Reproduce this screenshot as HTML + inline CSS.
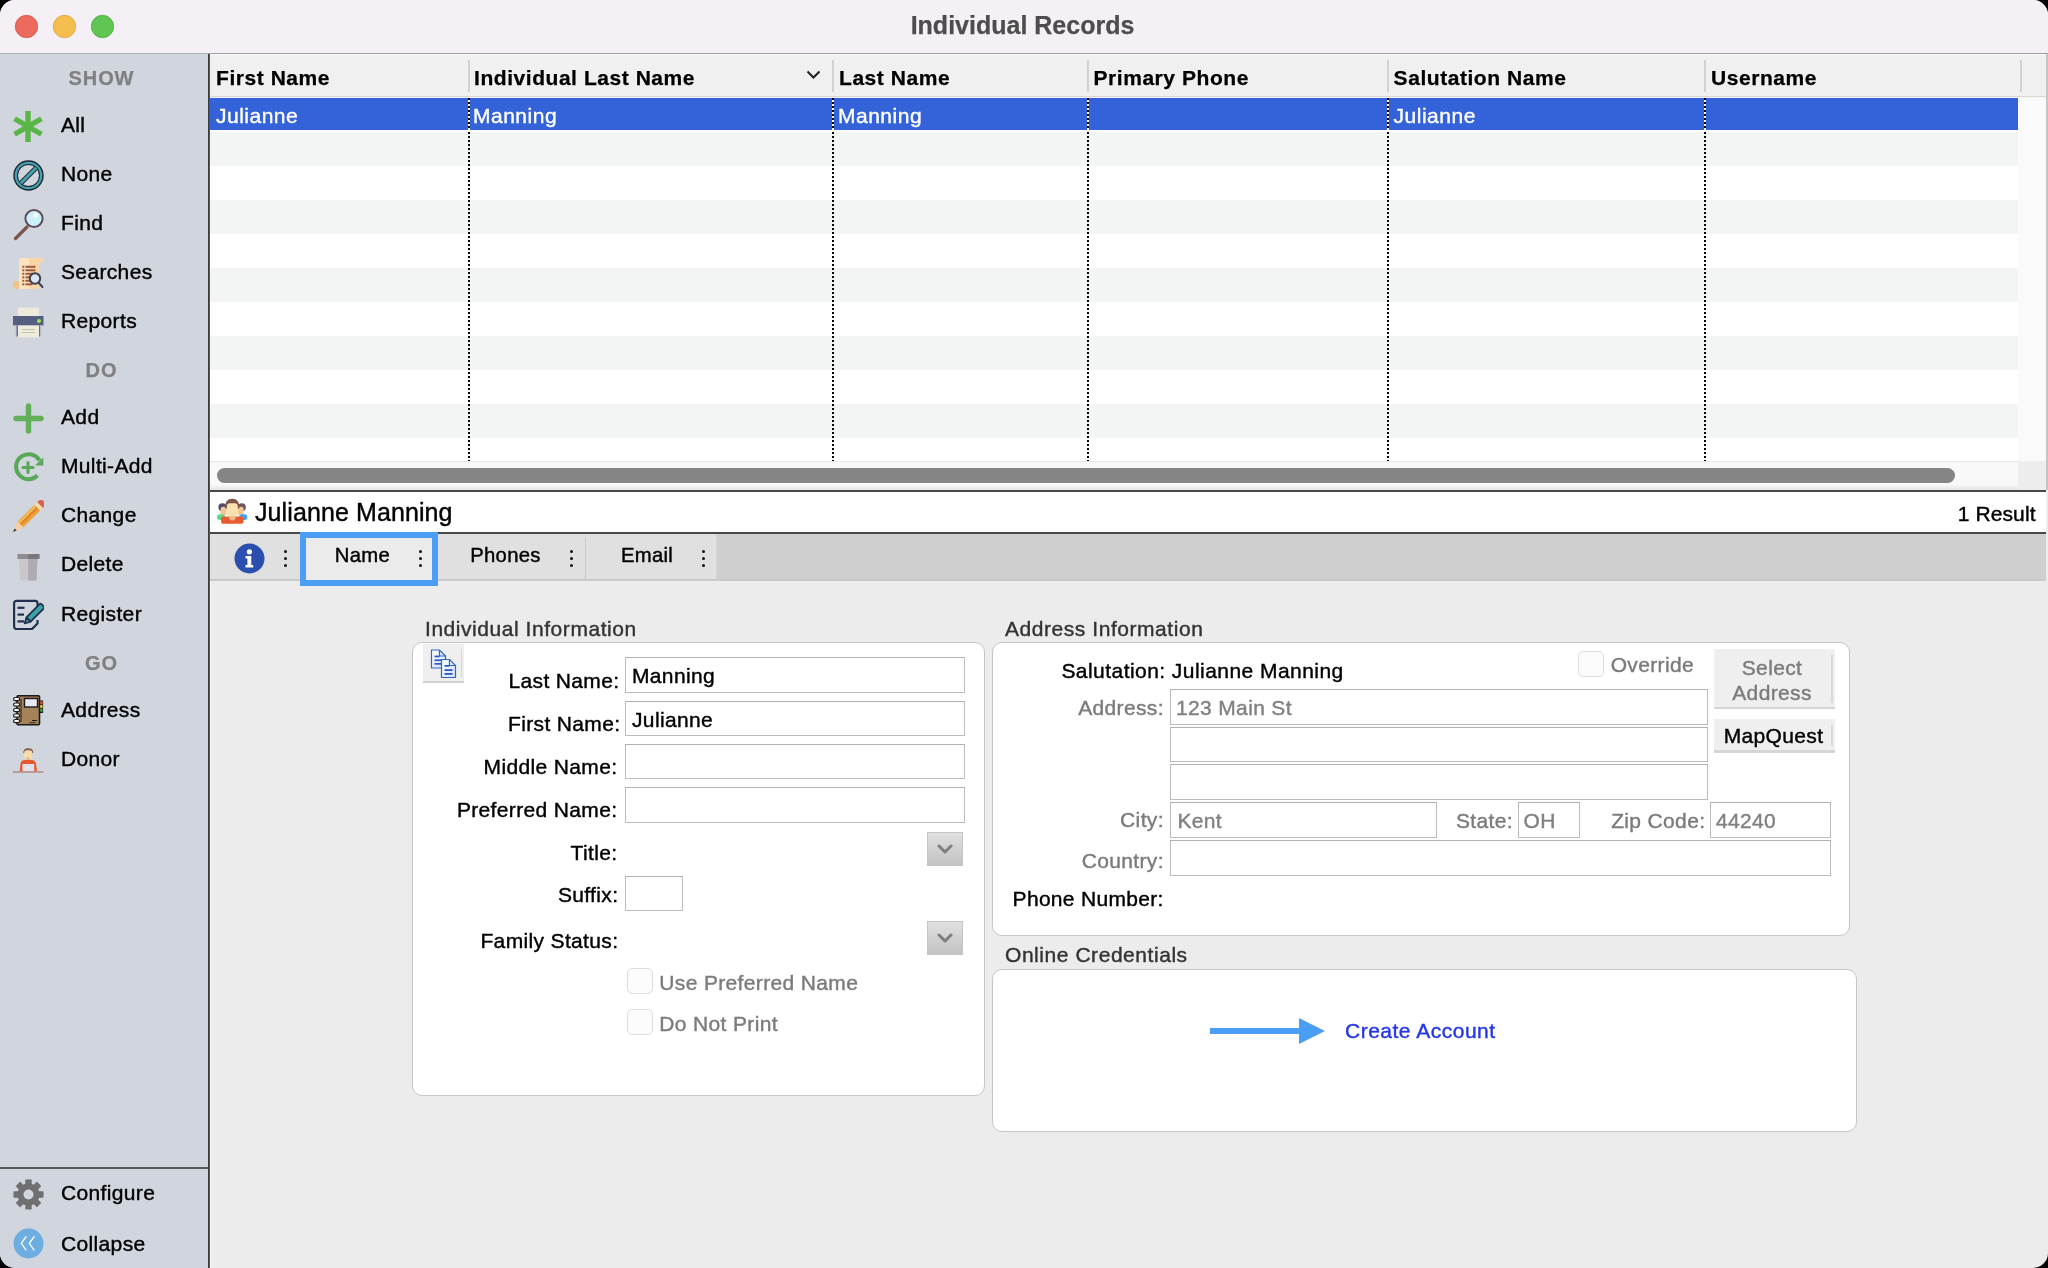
<!DOCTYPE html><html><head><meta charset="utf-8"><title>Individual Records</title><style>
html,body{margin:0;padding:0;background:#000;width:2048px;height:1268px;overflow:hidden;}
#win{will-change:transform;position:absolute;left:0;top:0;width:2048px;height:1268px;border-radius:15px;overflow:hidden;background:#ececec;font-family:"Liberation Sans", sans-serif;}
</style></head><body><div id="win">
<div style="position:absolute;left:0px;top:0px;width:2048px;height:53px;background:#f5f0f5;"></div>
<div style="position:absolute;left:0px;top:53px;width:2048px;height:1px;background:#a0a0a0;"></div>
<div style="position:absolute;left:0px;top:53px;width:208px;height:1px;background:#a9b0bb;"></div>
<svg style="position:absolute;left:14.0px;top:14px" width="25" height="25" viewBox="0 0 25 25"><circle cx="12.5" cy="12.5" r="11.2" fill="#ed6a5e" stroke="#d5544a" stroke-width="0.8"/></svg>
<svg style="position:absolute;left:52.0px;top:14px" width="25" height="25" viewBox="0 0 25 25"><circle cx="12.5" cy="12.5" r="11.2" fill="#f4bf4f" stroke="#d9a43a" stroke-width="0.8"/></svg>
<svg style="position:absolute;left:89.5px;top:14px" width="25" height="25" viewBox="0 0 25 25"><circle cx="12.5" cy="12.5" r="11.2" fill="#61c554" stroke="#4ea93f" stroke-width="0.8"/></svg>
<div style="position:absolute;left:622.5px;width:800px;text-align:center;top:12.84px;font-size:25px;line-height:25px;font-weight:700;color:#4d4d4d;letter-spacing:0px;white-space:nowrap;-webkit-text-stroke:0.25px currentColor;">Individual Records</div>
<div style="position:absolute;left:0px;top:54px;width:208px;height:1214px;background:#d1d5de;"></div>
<div style="position:absolute;left:208px;top:54px;width:1px;height:1214px;background:#3c3c3c;"></div>
<div style="position:absolute;left:209px;top:54px;width:1px;height:1214px;background:#555555;"></div>
<div style="position:absolute;left:-298.5px;width:800px;text-align:center;top:67.77px;font-size:20px;line-height:20px;font-weight:700;color:#808080;letter-spacing:0.9px;white-space:nowrap;-webkit-text-stroke:0.25px currentColor;">SHOW</div>
<div style="position:absolute;left:-298.5px;width:800px;text-align:center;top:360.07px;font-size:20px;line-height:20px;font-weight:700;color:#808080;letter-spacing:0.9px;white-space:nowrap;-webkit-text-stroke:0.25px currentColor;">DO</div>
<div style="position:absolute;left:-298.5px;width:800px;text-align:center;top:652.97px;font-size:20px;line-height:20px;font-weight:700;color:#808080;letter-spacing:0.9px;white-space:nowrap;-webkit-text-stroke:0.25px currentColor;">GO</div>
<div style="position:absolute;left:61px;top:113.92px;font-size:21px;line-height:21px;font-weight:400;color:#000;letter-spacing:0.35px;white-space:nowrap;-webkit-text-stroke:0.4px currentColor;">All</div>
<div style="position:absolute;left:61px;top:163.02px;font-size:21px;line-height:21px;font-weight:400;color:#000;letter-spacing:0.35px;white-space:nowrap;-webkit-text-stroke:0.4px currentColor;">None</div>
<div style="position:absolute;left:61px;top:212.02px;font-size:21px;line-height:21px;font-weight:400;color:#000;letter-spacing:0.35px;white-space:nowrap;-webkit-text-stroke:0.4px currentColor;">Find</div>
<div style="position:absolute;left:61px;top:261.02px;font-size:21px;line-height:21px;font-weight:400;color:#000;letter-spacing:0.35px;white-space:nowrap;-webkit-text-stroke:0.4px currentColor;">Searches</div>
<div style="position:absolute;left:61px;top:310.02px;font-size:21px;line-height:21px;font-weight:400;color:#000;letter-spacing:0.35px;white-space:nowrap;-webkit-text-stroke:0.4px currentColor;">Reports</div>
<div style="position:absolute;left:61px;top:406.22px;font-size:21px;line-height:21px;font-weight:400;color:#000;letter-spacing:0.35px;white-space:nowrap;-webkit-text-stroke:0.4px currentColor;">Add</div>
<div style="position:absolute;left:61px;top:455.22px;font-size:21px;line-height:21px;font-weight:400;color:#000;letter-spacing:0.35px;white-space:nowrap;-webkit-text-stroke:0.4px currentColor;">Multi-Add</div>
<div style="position:absolute;left:61px;top:504.32px;font-size:21px;line-height:21px;font-weight:400;color:#000;letter-spacing:0.35px;white-space:nowrap;-webkit-text-stroke:0.4px currentColor;">Change</div>
<div style="position:absolute;left:61px;top:553.42px;font-size:21px;line-height:21px;font-weight:400;color:#000;letter-spacing:0.35px;white-space:nowrap;-webkit-text-stroke:0.4px currentColor;">Delete</div>
<div style="position:absolute;left:61px;top:602.62px;font-size:21px;line-height:21px;font-weight:400;color:#000;letter-spacing:0.35px;white-space:nowrap;-webkit-text-stroke:0.4px currentColor;">Register</div>
<div style="position:absolute;left:61px;top:698.62px;font-size:21px;line-height:21px;font-weight:400;color:#000;letter-spacing:0.35px;white-space:nowrap;-webkit-text-stroke:0.4px currentColor;">Address</div>
<div style="position:absolute;left:61px;top:747.52px;font-size:21px;line-height:21px;font-weight:400;color:#000;letter-spacing:0.35px;white-space:nowrap;-webkit-text-stroke:0.4px currentColor;">Donor</div>
<div style="position:absolute;left:61px;top:1181.82px;font-size:21px;line-height:21px;font-weight:400;color:#000;letter-spacing:0.35px;white-space:nowrap;-webkit-text-stroke:0.4px currentColor;">Configure</div>
<div style="position:absolute;left:61px;top:1232.62px;font-size:21px;line-height:21px;font-weight:400;color:#000;letter-spacing:0.35px;white-space:nowrap;-webkit-text-stroke:0.4px currentColor;">Collapse</div>
<div style="position:absolute;left:0px;top:1166.5px;width:208px;height:2.0px;background:#585858;"></div>
<svg style="position:absolute;left:13px;top:111px" width="30" height="31" viewBox="0 0 30 31"><g fill="#5ab646"><rect x="12.3" y="0" width="5.4" height="31"/><rect x="12.3" y="0" width="5.4" height="31" transform="rotate(60 15 15.5)"/><rect x="12.3" y="0" width="5.4" height="31" transform="rotate(-60 15 15.5)"/></g></svg>
<svg style="position:absolute;left:13px;top:160px" width="31" height="31" viewBox="0 0 31 31"><circle cx="15.5" cy="15.5" r="15.2" fill="#1c2a2e"/><circle cx="15.5" cy="15.5" r="13.8" fill="#45a0b0"/><circle cx="15.5" cy="15.5" r="11.5" fill="#1c2a2e"/><circle cx="15.5" cy="15.5" r="10.5" fill="#d1d5de"/><g transform="rotate(45 15.5 15.5)"><rect x="13" y="4.2" width="5" height="22.6" fill="#1c2a2e"/><rect x="14" y="4.5" width="3" height="22" fill="#45a0b0"/></g></svg>
<svg style="position:absolute;left:13px;top:208px" width="31" height="33" viewBox="0 0 31 33"><line x1="2.5" y1="30.5" x2="14" y2="19" stroke="#7d5448" stroke-width="3.2" stroke-linecap="round"/><circle cx="21" cy="10.5" r="8.6" fill="#c9f0fb" stroke="#5e4b5c" stroke-width="2"/><circle cx="22.5" cy="7.5" r="2.4" fill="#ffffff"/></svg>
<svg style="position:absolute;left:13px;top:258px" width="31" height="31" viewBox="0 0 31 31"><path d="M6 3 Q6 0 9 0 H28 Q30.5 0 30.5 3 V4.5 H26 V28 Q26 31 23 31 H3 Q0 31 0 28 V23 H6 Z" fill="#fbe3bd"/><path d="M16 0 H28 Q30.5 0 30.5 3 V4.5 H26 V31 H16 Z" fill="#f6d09e" opacity="0.7"/><path d="M0 23 H6 V31 H3 Q0 31 0 28 Z" fill="#eec38c"/><g fill="#9c5a3c"><rect x="9.3" y="7.8" width="2" height="2"/><rect x="12.5" y="7.8" width="10" height="2"/><rect x="9.3" y="11.3" width="2" height="2"/><rect x="12.5" y="11.3" width="10" height="2"/><rect x="9.3" y="14.8" width="2" height="2"/><rect x="12.5" y="14.8" width="8" height="2"/><rect x="9.3" y="18.3" width="2" height="2"/><rect x="12.5" y="18.3" width="5" height="2"/><rect x="9.3" y="21.8" width="2" height="2"/><rect x="12.5" y="21.8" width="5" height="2"/><rect x="9.3" y="25.3" width="2" height="2"/><rect x="12.5" y="25.3" width="7" height="2"/></g><line x1="25" y1="24" x2="29.5" y2="29" stroke="#3b4250" stroke-width="2" stroke-linecap="round"/><circle cx="22" cy="20.5" r="5.2" fill="#dfe4f3" stroke="#3b4250" stroke-width="2"/></svg>
<svg style="position:absolute;left:13px;top:307px" width="31" height="31" viewBox="0 0 31 31"><rect x="5" y="0.5" width="21" height="9" fill="#eeebdc"/><rect x="0" y="9" width="30.5" height="9.5" fill="#545f80"/><circle cx="26" cy="14" r="2" fill="#9be25a"/><rect x="1.2" y="18.5" width="3" height="10" fill="#cfcfcf"/><rect x="26.5" y="18.5" width="3" height="10" fill="#cfcfcf"/><rect x="3.5" y="18.5" width="2" height="11" fill="#5f6db0"/><rect x="25.2" y="18.5" width="2" height="11" fill="#5f6db0"/><rect x="5" y="18.5" width="21" height="12" fill="#eeebdc"/><rect x="9" y="22" width="13" height="1" fill="#c8c4a8"/><rect x="9" y="25" width="13" height="1" fill="#c8c4a8"/></svg>
<svg style="position:absolute;left:13px;top:403px" width="31" height="31" viewBox="0 0 31 31"><g stroke="#62b15a" stroke-width="5.4" stroke-linecap="round"><line x1="15.5" y1="3" x2="15.5" y2="28"/><line x1="3" y1="15.5" x2="28" y2="15.5"/></g></svg>
<svg style="position:absolute;left:13px;top:452px" width="31" height="31" viewBox="0 0 31 31"><path d="M24.5 23.5 A12.5 12.5 0 1 1 26.5 8.5" fill="none" stroke="#59a857" stroke-width="4"/><path d="M30.3 5.5 L30.3 13.5 L22 13.5 Z" fill="#59a857"/><g stroke="#59a857" stroke-width="3" stroke-linecap="round"><line x1="15" y1="10.5" x2="15" y2="20.5"/><line x1="10" y1="15.5" x2="20" y2="15.5"/></g></svg>
<svg style="position:absolute;left:13px;top:500px" width="31" height="33" viewBox="0 0 31 33"><g transform="translate(15.25 16.75) rotate(45)"><path d="M-4 -16.5 V-18 A4 4 0 0 1 4 -18 V-16.5 Z" fill="#d9634f"/><rect x="-4" y="-16.5" width="8" height="3.5" fill="#f3e6c0"/><rect x="-4" y="-15.3" width="8" height="0.7" fill="#e0cf9c"/><rect x="-4" y="-13" width="8" height="24" fill="#f0a33a"/><rect x="-1.2" y="-13" width="2.4" height="24" fill="#e3892b"/><rect x="-2.9" y="-13" width="1.1" height="24" fill="#f7cf6a"/><path d="M-4 11 H4 L0 21.5 Z" fill="#f6cfa0"/><path d="M-1.3 17.8 H1.3 L0 21.5 Z" fill="#2a2a2a"/></g></svg>
<svg style="position:absolute;left:13px;top:550px" width="31" height="31" viewBox="0 0 31 31"><rect x="13.5" y="1.5" width="6" height="2.5" fill="#e0dcd6"/><rect x="4.4" y="4" width="22" height="5" fill="#8f8d94"/><path d="M6 9 H24.5 L23.5 30.6 H7 Z" fill="#c9c7cb"/><path d="M15.2 9 H24.5 L23.5 30.6 H15.2 Z" fill="#aeacb2"/><rect x="15.2" y="4" width="11.2" height="5" fill="#7a787f"/></svg>
<svg style="position:absolute;left:13px;top:599px" width="31" height="31" viewBox="0 0 31 31"><path d="M24.5 12 V4.2 Q24.5 1.8 22 1.8 H3.6 Q1.1 1.8 1.1 4.3 V27.6 Q1.1 30 3.6 30 H19 L24.5 24.5 V21" fill="none" stroke="#22304f" stroke-width="2.2" stroke-linejoin="round"/><g stroke="#22304f" stroke-width="2.2"><line x1="4.5" y1="8.8" x2="11.5" y2="8.8"/><line x1="4.5" y1="15.6" x2="11" y2="15.6"/><line x1="4.5" y1="22.4" x2="11" y2="22.4"/></g><g transform="translate(20.7 15.35) rotate(45)"><rect x="-3" y="-12.7" width="6" height="20" rx="1" fill="#3aa3a6" stroke="#22304f" stroke-width="1.8"/><path d="M-3 7.3 L0 12.7 L3 7.3 Z" fill="#3aa3a6" stroke="#22304f" stroke-width="1.8" stroke-linejoin="round"/></g></svg>
<svg style="position:absolute;left:13px;top:695px" width="31" height="31" viewBox="0 0 31 31"><rect x="4" y="0.8" width="22.5" height="29" rx="1" fill="#a68258" stroke="#1b1b1b" stroke-width="1.6"/><rect x="26.5" y="5.5" width="3.6" height="12.5" fill="#1b1b1b"/><rect x="27.2" y="6.3" width="2.3" height="3" fill="#e2572d"/><rect x="27.2" y="10" width="2.3" height="3" fill="#f0c43b"/><rect x="27.2" y="13.7" width="2.3" height="3" fill="#3ba94a"/><rect x="11.5" y="3.5" width="13" height="8.5" fill="#e6e9ef" stroke="#1b1b1b" stroke-width="1.4"/><line x1="8" y1="4" x2="8" y2="27" stroke="#1b1b1b" stroke-width="1"/><rect x="19" y="25" width="5" height="1" fill="#1b1b1b"/><rect x="16.5" y="27" width="6" height="1.2" fill="#4c3b2c"/><g fill="#fff" stroke="#1b1b1b" stroke-width="1.2"><rect x="0.6" y="2.5" width="6" height="3.2" rx="1.6"/><rect x="0.6" y="8" width="6" height="3.2" rx="1.6"/><rect x="0.6" y="13.5" width="6" height="3.2" rx="1.6"/><rect x="0.6" y="19" width="6" height="3.2" rx="1.6"/><rect x="0.6" y="24.5" width="6" height="3.2" rx="1.6"/></g></svg>
<svg style="position:absolute;left:13px;top:744px" width="31" height="31" viewBox="0 0 31 31"><path d="M10.3 9 Q10 4.2 15.2 4.2 Q20.5 4.2 20.2 9 Z" fill="#7e5a4c"/><rect x="11.2" y="6.3" width="8" height="9" rx="2.5" fill="#f8dca8"/><rect x="13.7" y="13.5" width="3" height="2.5" fill="#e9b47c"/><path d="M6.7 27.5 L7.5 20 Q8 16 12 16 H18.5 Q22.5 16 23 20 L24 27.5 Z" fill="#e8562f"/><rect x="9.5" y="20" width="11.7" height="7.5" fill="#dde1e7"/><rect x="14.6" y="23" width="1.4" height="1.4" fill="#fff"/><rect x="0" y="27.2" width="30.5" height="1.6" fill="#b48f8a"/></svg>
<svg style="position:absolute;left:13px;top:1179px" width="31" height="31" viewBox="0 0 31 31"><g transform="translate(15.5 15.5)" fill="#6f6f6f"><circle r="11"/><g id="teeth"><rect x="-3.2" y="-15" width="6.4" height="6" rx="0.6"/><rect x="-3.2" y="-15" width="6.4" height="6" rx="0.6" transform="rotate(45)"/><rect x="-3.2" y="-15" width="6.4" height="6" rx="0.6" transform="rotate(90)"/><rect x="-3.2" y="-15" width="6.4" height="6" rx="0.6" transform="rotate(135)"/><rect x="-3.2" y="-15" width="6.4" height="6" rx="0.6" transform="rotate(180)"/><rect x="-3.2" y="-15" width="6.4" height="6" rx="0.6" transform="rotate(225)"/><rect x="-3.2" y="-15" width="6.4" height="6" rx="0.6" transform="rotate(270)"/><rect x="-3.2" y="-15" width="6.4" height="6" rx="0.6" transform="rotate(315)"/></g><circle r="5" fill="#d1d5de"/></g></svg>
<svg style="position:absolute;left:13px;top:1228px" width="31" height="31" viewBox="0 0 31 31"><circle cx="15.5" cy="15.5" r="15" fill="#6dade0"/><g fill="none" stroke="#fff" stroke-width="1.3"><path d="M13.3 8.3 L8.3 15.3 L13.3 22.3"/><path d="M21.3 8.3 L16.3 15.3 L21.3 22.3"/></g></svg>
<div style="position:absolute;left:210px;top:54px;width:1836px;height:43px;background:#f0f0f0;"></div>
<div style="position:absolute;left:210px;top:54px;width:1836px;height:1px;background:#fafafa;"></div>
<div style="position:absolute;left:210px;top:96px;width:1836px;height:1px;background:#dcd8d0;"></div>
<div style="position:absolute;left:210px;top:97px;width:1836px;height:1px;background:#f4f4f4;"></div>
<div style="position:absolute;left:468px;top:60px;width:1.5px;height:32px;background:#d2d2d2;"></div>
<div style="position:absolute;left:832px;top:60px;width:1.5px;height:32px;background:#d2d2d2;"></div>
<div style="position:absolute;left:1087px;top:60px;width:1.5px;height:32px;background:#d2d2d2;"></div>
<div style="position:absolute;left:1387px;top:60px;width:1.5px;height:32px;background:#d2d2d2;"></div>
<div style="position:absolute;left:1704px;top:60px;width:1.5px;height:32px;background:#d2d2d2;"></div>
<div style="position:absolute;left:2020px;top:60px;width:1.5px;height:32px;background:#d2d2d2;"></div>
<div style="position:absolute;left:216px;top:66.92px;font-size:21px;line-height:21px;font-weight:700;color:#000;letter-spacing:0.55px;white-space:nowrap;-webkit-text-stroke:0.25px currentColor;">First Name</div>
<div style="position:absolute;left:474px;top:66.92px;font-size:21px;line-height:21px;font-weight:700;color:#000;letter-spacing:0.55px;white-space:nowrap;-webkit-text-stroke:0.25px currentColor;">Individual Last Name</div>
<div style="position:absolute;left:839px;top:66.92px;font-size:21px;line-height:21px;font-weight:700;color:#000;letter-spacing:0.55px;white-space:nowrap;-webkit-text-stroke:0.25px currentColor;">Last Name</div>
<div style="position:absolute;left:1093.5px;top:66.92px;font-size:21px;line-height:21px;font-weight:700;color:#000;letter-spacing:0.55px;white-space:nowrap;-webkit-text-stroke:0.25px currentColor;">Primary Phone</div>
<div style="position:absolute;left:1393.6px;top:66.92px;font-size:21px;line-height:21px;font-weight:700;color:#000;letter-spacing:0.55px;white-space:nowrap;-webkit-text-stroke:0.25px currentColor;">Salutation Name</div>
<div style="position:absolute;left:1711px;top:66.92px;font-size:21px;line-height:21px;font-weight:700;color:#000;letter-spacing:0.55px;white-space:nowrap;-webkit-text-stroke:0.25px currentColor;">Username</div>
<svg style="position:absolute;left:806px;top:70px" width="15" height="10" viewBox="0 0 15 10"><path d="M1.5 1.5 L7.5 7.5 L13.5 1.5" fill="none" stroke="#222" stroke-width="2"/></svg>
<div style="position:absolute;left:210px;top:98px;width:1808px;height:363px;background:#ffffff;"></div>
<div style="position:absolute;left:210px;top:98px;width:1808px;height:32px;background:#3462d8;"></div>
<div style="position:absolute;left:210px;top:132px;width:1808px;height:34px;background:#f3f5f4;"></div>
<div style="position:absolute;left:210px;top:200px;width:1808px;height:34px;background:#f3f5f4;"></div>
<div style="position:absolute;left:210px;top:268px;width:1808px;height:34px;background:#f3f5f4;"></div>
<div style="position:absolute;left:210px;top:336px;width:1808px;height:34px;background:#f3f5f4;"></div>
<div style="position:absolute;left:210px;top:404px;width:1808px;height:34px;background:#f3f5f4;"></div>
<div style="position:absolute;left:2018px;top:98px;width:28px;height:392px;background:#fafafa;"></div>
<div style="position:absolute;left:2018px;top:461px;width:28px;height:29px;background:#ededed;"></div>
<div style="position:absolute;left:2046px;top:54px;width:2px;height:436px;background:#c4c4c4;"></div>
<div style="position:absolute;left:468px;top:98px;width:2px;height:32px;background:repeating-linear-gradient(to bottom,#000 0 2px,#fff 2px 4px);"></div>
<div style="position:absolute;left:468px;top:132px;width:2px;height:329px;background:repeating-linear-gradient(to bottom,#000 0 2px,transparent 2px 4px);"></div>
<div style="position:absolute;left:832px;top:98px;width:2px;height:32px;background:repeating-linear-gradient(to bottom,#000 0 2px,#fff 2px 4px);"></div>
<div style="position:absolute;left:832px;top:132px;width:2px;height:329px;background:repeating-linear-gradient(to bottom,#000 0 2px,transparent 2px 4px);"></div>
<div style="position:absolute;left:1087px;top:98px;width:2px;height:32px;background:repeating-linear-gradient(to bottom,#000 0 2px,#fff 2px 4px);"></div>
<div style="position:absolute;left:1087px;top:132px;width:2px;height:329px;background:repeating-linear-gradient(to bottom,#000 0 2px,transparent 2px 4px);"></div>
<div style="position:absolute;left:1387px;top:98px;width:2px;height:32px;background:repeating-linear-gradient(to bottom,#000 0 2px,#fff 2px 4px);"></div>
<div style="position:absolute;left:1387px;top:132px;width:2px;height:329px;background:repeating-linear-gradient(to bottom,#000 0 2px,transparent 2px 4px);"></div>
<div style="position:absolute;left:1704px;top:98px;width:2px;height:32px;background:repeating-linear-gradient(to bottom,#000 0 2px,#fff 2px 4px);"></div>
<div style="position:absolute;left:1704px;top:132px;width:2px;height:329px;background:repeating-linear-gradient(to bottom,#000 0 2px,transparent 2px 4px);"></div>
<div style="position:absolute;left:216px;top:104.92px;font-size:21px;line-height:21px;font-weight:400;color:#ffffff;letter-spacing:0.5px;white-space:nowrap;-webkit-text-stroke:0.4px currentColor;">Julianne</div>
<div style="position:absolute;left:473px;top:104.92px;font-size:21px;line-height:21px;font-weight:400;color:#ffffff;letter-spacing:0.5px;white-space:nowrap;-webkit-text-stroke:0.4px currentColor;">Manning</div>
<div style="position:absolute;left:838px;top:104.92px;font-size:21px;line-height:21px;font-weight:400;color:#ffffff;letter-spacing:0.5px;white-space:nowrap;-webkit-text-stroke:0.4px currentColor;">Manning</div>
<div style="position:absolute;left:1393.6px;top:104.92px;font-size:21px;line-height:21px;font-weight:400;color:#ffffff;letter-spacing:0.5px;white-space:nowrap;-webkit-text-stroke:0.4px currentColor;">Julianne</div>
<div style="position:absolute;left:210px;top:461px;width:1808px;height:1px;background:#e6e6e6;"></div>
<div style="position:absolute;left:210px;top:462px;width:1808px;height:28px;background:linear-gradient(to bottom,#f9f9f9 0,#f9f9f9 80%,#e4e4e4 100%);"></div>
<div style="position:absolute;left:217px;top:468px;width:1738px;height:15px;background:#858585;border-radius:7.5px;"></div>
<div style="position:absolute;left:210px;top:490px;width:1836px;height:2px;background:#484848;"></div>
<div style="position:absolute;left:210px;top:492px;width:1836px;height:40px;background:#ffffff;"></div>
<svg style="position:absolute;left:216px;top:498px" width="32" height="27" viewBox="0 0 32 27"><circle cx="6.4" cy="9.2" r="4" fill="#514c6c"/><circle cx="25.8" cy="9.2" r="4" fill="#70545c"/><rect x="4.6" y="8.8" width="5.8" height="9" rx="2.5" fill="#f2c792"/><rect x="21.8" y="8.8" width="5.8" height="9" rx="2.5" fill="#f2c792"/><rect x="1" y="16.3" width="8" height="5.6" rx="2.6" fill="#63d98f"/><rect x="23.3" y="16.3" width="8" height="5.6" rx="2.6" fill="#44a2f2"/><path d="M5.1 20 Q5.1 18.4 6.7 18.4 H25.9 Q27.5 18.4 27.5 20 V24 Q27.5 25.8 25.7 25.8 H6.9 Q5.1 25.8 5.1 24 Z" fill="#e85a2f"/><path d="M9 10.5 Q8.6 0.7 16.2 0.7 Q23.8 0.7 23.4 10.5 Z" fill="#7d5649"/><path d="M12.4 16 H20.2 Q20.2 22.6 16.3 22.6 Q12.4 22.6 12.4 16 Z" fill="#f0bb86"/><rect x="10.9" y="5.2" width="10.8" height="13" rx="3" fill="#f8e0b0"/></svg>
<div style="position:absolute;left:255px;top:499.64px;font-size:25px;line-height:25px;font-weight:400;color:#000;letter-spacing:0.1px;white-space:nowrap;-webkit-text-stroke:0.4px currentColor;">Julianne Manning</div>
<div style="position:absolute;right:12.4px;text-align:right;top:503.02px;font-size:21px;line-height:21px;font-weight:400;color:#000;letter-spacing:0.1px;white-space:nowrap;-webkit-text-stroke:0.4px currentColor;">1 Result</div>
<div style="position:absolute;left:210px;top:532px;width:1836px;height:2px;background:#484848;"></div>
<div style="position:absolute;left:210px;top:534px;width:1836px;height:46px;background:#cfcfcf;"></div>
<div style="position:absolute;left:210px;top:534px;width:507px;height:45px;background:#e0e0e0;"></div>
<div style="position:absolute;left:210px;top:579px;width:1836px;height:2px;background:#c9c9c9;"></div>
<div style="position:absolute;left:585px;top:538px;width:1px;height:41px;background:#c8c8c8;"></div>
<div style="position:absolute;left:716px;top:534px;width:1px;height:45px;background:#d4d4d4;"></div>
<svg style="position:absolute;left:234px;top:543px" width="31" height="31" viewBox="0 0 31 31"><circle cx="15.5" cy="15.5" r="15" fill="#2a4fae"/><circle cx="15.4" cy="8.8" r="2.6" fill="#fff"/><path d="M11.5 13 H17.3 V22 H19.2 V24.5 H11.5 V22 H13.4 V15.5 H11.5 Z" fill="#fff"/></svg>
<div style="position:absolute;left:283.5px;top:549.5px;width:3.0px;height:3.0px;background:#111;border-radius:50%;"></div>
<div style="position:absolute;left:283.5px;top:556.5px;width:3.0px;height:3.0px;background:#111;border-radius:50%;"></div>
<div style="position:absolute;left:283.5px;top:563.5px;width:3.0px;height:3.0px;background:#111;border-radius:50%;"></div>
<div style="position:absolute;left:419.0px;top:549.5px;width:3.0px;height:3.0px;background:#111;border-radius:50%;"></div>
<div style="position:absolute;left:419.0px;top:556.5px;width:3.0px;height:3.0px;background:#111;border-radius:50%;"></div>
<div style="position:absolute;left:419.0px;top:563.5px;width:3.0px;height:3.0px;background:#111;border-radius:50%;"></div>
<div style="position:absolute;left:569.5px;top:549.5px;width:3.0px;height:3.0px;background:#111;border-radius:50%;"></div>
<div style="position:absolute;left:569.5px;top:556.5px;width:3.0px;height:3.0px;background:#111;border-radius:50%;"></div>
<div style="position:absolute;left:569.5px;top:563.5px;width:3.0px;height:3.0px;background:#111;border-radius:50%;"></div>
<div style="position:absolute;left:701.5px;top:549.5px;width:3.0px;height:3.0px;background:#111;border-radius:50%;"></div>
<div style="position:absolute;left:701.5px;top:556.5px;width:3.0px;height:3.0px;background:#111;border-radius:50%;"></div>
<div style="position:absolute;left:701.5px;top:563.5px;width:3.0px;height:3.0px;background:#111;border-radius:50%;"></div>
<div style="position:absolute;left:300px;top:532px;width:138px;height:54px;background:#ebebeb;border:6px solid #4a9ff5;box-sizing:border-box;"></div>
<div style="position:absolute;left:419.0px;top:549.5px;width:3.0px;height:3.0px;background:#111;border-radius:50%;"></div>
<div style="position:absolute;left:419.0px;top:556.5px;width:3.0px;height:3.0px;background:#111;border-radius:50%;"></div>
<div style="position:absolute;left:419.0px;top:563.5px;width:3.0px;height:3.0px;background:#111;border-radius:50%;"></div>
<div style="position:absolute;left:-37.5px;width:800px;text-align:center;top:545.32px;font-size:20.3px;line-height:20.3px;font-weight:400;color:#000;letter-spacing:0.3px;white-space:nowrap;-webkit-text-stroke:0.4px currentColor;">Name</div>
<div style="position:absolute;left:105.5px;width:800px;text-align:center;top:545.32px;font-size:20.3px;line-height:20.3px;font-weight:400;color:#000;letter-spacing:0.3px;white-space:nowrap;-webkit-text-stroke:0.4px currentColor;">Phones</div>
<div style="position:absolute;left:247px;width:800px;text-align:center;top:545.32px;font-size:20.3px;line-height:20.3px;font-weight:400;color:#000;letter-spacing:0.3px;white-space:nowrap;-webkit-text-stroke:0.4px currentColor;">Email</div>
<div style="position:absolute;left:425px;top:618.22px;font-size:21px;line-height:21px;font-weight:400;color:#333;letter-spacing:0.55px;white-space:nowrap;-webkit-text-stroke:0.4px currentColor;">Individual Information</div>
<div style="position:absolute;left:412px;top:642px;width:573px;height:454px;background:#fff;border:1.5px solid #c6c6c6;border-radius:10px;box-sizing:border-box;"></div>
<div style="position:absolute;left:423px;top:644px;width:41px;height:39px;background:#efefef;"></div>
<div style="position:absolute;left:423px;top:680.5px;width:41px;height:2.5px;background:#d3d3d3;"></div>
<div style="position:absolute;left:460.5px;top:649px;width:1.5px;height:28px;background:#d6d6d6;"></div>
<svg style="position:absolute;left:430px;top:649px" width="27" height="30" viewBox="0 0 27 30"><defs><linearGradient id="dg" x1="0" y1="0" x2="1" y2="1"><stop offset="0" stop-color="#fff"/><stop offset="1" stop-color="#cfe0f6"/></linearGradient></defs><path d="M1.5 1 H9.5 L15.5 7 V19 H1.5 Z" fill="url(#dg)" stroke="#2f64c8" stroke-width="1.2"/><path d="M9.5 1 V7 H15.5" fill="none" stroke="#2f64c8" stroke-width="1.2"/><g fill="#2a58c0"><rect x="4.5" y="6.6" width="5" height="1.7"/><rect x="4.5" y="10.4" width="8" height="1.7"/><rect x="4.5" y="14" width="8" height="1.7"/></g><path d="M11.5 10.5 H19.5 L25.5 16.5 V28.5 H11.5 Z" fill="url(#dg)" stroke="#2f64c8" stroke-width="1.2"/><path d="M19.5 10.5 V16.5 H25.5" fill="none" stroke="#2f64c8" stroke-width="1.2"/><g fill="#2a58c0"><rect x="14.5" y="16" width="5" height="1.7"/><rect x="14.5" y="20.2" width="8" height="1.8"/><rect x="14.5" y="24" width="8" height="1.8"/></g></svg>
<div style="position:absolute;right:1428.65px;text-align:right;top:669.52px;font-size:21px;line-height:21px;font-weight:400;color:#000;letter-spacing:0.35px;white-space:nowrap;-webkit-text-stroke:0.4px currentColor;">Last Name:</div>
<div style="position:absolute;right:1427.65px;text-align:right;top:712.62px;font-size:21px;line-height:21px;font-weight:400;color:#000;letter-spacing:0.35px;white-space:nowrap;-webkit-text-stroke:0.4px currentColor;">First Name:</div>
<div style="position:absolute;right:1430.65px;text-align:right;top:756.02px;font-size:21px;line-height:21px;font-weight:400;color:#000;letter-spacing:0.35px;white-space:nowrap;-webkit-text-stroke:0.4px currentColor;">Middle Name:</div>
<div style="position:absolute;right:1430.65px;text-align:right;top:799.42px;font-size:21px;line-height:21px;font-weight:400;color:#000;letter-spacing:0.35px;white-space:nowrap;-webkit-text-stroke:0.4px currentColor;">Preferred Name:</div>
<div style="position:absolute;right:1430.65px;text-align:right;top:842.22px;font-size:21px;line-height:21px;font-weight:400;color:#000;letter-spacing:0.35px;white-space:nowrap;-webkit-text-stroke:0.4px currentColor;">Title:</div>
<div style="position:absolute;right:1429.65px;text-align:right;top:884.42px;font-size:21px;line-height:21px;font-weight:400;color:#000;letter-spacing:0.35px;white-space:nowrap;-webkit-text-stroke:0.4px currentColor;">Suffix:</div>
<div style="position:absolute;right:1429.65px;text-align:right;top:929.72px;font-size:21px;line-height:21px;font-weight:400;color:#000;letter-spacing:0.35px;white-space:nowrap;-webkit-text-stroke:0.4px currentColor;">Family Status:</div>
<div style="position:absolute;left:625px;top:657px;width:340px;height:35.5px;background:#fff;border:1px solid #bcbcbc;border-top-color:#b0b0b0;box-sizing:border-box;"></div>
<div style="position:absolute;left:625px;top:700.5px;width:340px;height:35.5px;background:#fff;border:1px solid #bcbcbc;border-top-color:#b0b0b0;box-sizing:border-box;"></div>
<div style="position:absolute;left:625px;top:743.5px;width:340px;height:35.5px;background:#fff;border:1px solid #bcbcbc;border-top-color:#b0b0b0;box-sizing:border-box;"></div>
<div style="position:absolute;left:625px;top:787px;width:340px;height:35.5px;background:#fff;border:1px solid #bcbcbc;border-top-color:#b0b0b0;box-sizing:border-box;"></div>
<div style="position:absolute;left:632px;top:664.92px;font-size:21px;line-height:21px;font-weight:400;color:#000;letter-spacing:0.35px;white-space:nowrap;-webkit-text-stroke:0.4px currentColor;">Manning</div>
<div style="position:absolute;left:632px;top:708.82px;font-size:21px;line-height:21px;font-weight:400;color:#000;letter-spacing:0.35px;white-space:nowrap;-webkit-text-stroke:0.4px currentColor;">Julianne</div>
<div style="position:absolute;left:927px;top:832px;width:36px;height:34px;background:linear-gradient(to bottom,#e0e0e0,#c3c3c3);border:1px solid #c4c4c4;box-sizing:border-box;"></div>
<svg style="position:absolute;left:937px;top:844px" width="16" height="10" viewBox="0 0 16 10"><path d="M2 2 L8 8 L14 2" fill="none" stroke="#7e7e7e" stroke-width="3" stroke-linecap="round" stroke-linejoin="round"/></svg>
<div style="position:absolute;left:625px;top:875.5px;width:58px;height:35.5px;background:#fff;border:1px solid #bcbcbc;border-top-color:#b0b0b0;box-sizing:border-box;"></div>
<div style="position:absolute;left:927px;top:921px;width:36px;height:34px;background:linear-gradient(to bottom,#e0e0e0,#c3c3c3);border:1px solid #c4c4c4;box-sizing:border-box;"></div>
<svg style="position:absolute;left:937px;top:933px" width="16" height="10" viewBox="0 0 16 10"><path d="M2 2 L8 8 L14 2" fill="none" stroke="#7e7e7e" stroke-width="3" stroke-linecap="round" stroke-linejoin="round"/></svg>
<div style="position:absolute;left:627px;top:968px;width:26px;height:26px;background:#fcfcfc;border:1px solid #dedede;border-radius:5px;box-sizing:border-box;"></div>
<div style="position:absolute;left:627px;top:1009px;width:26px;height:26px;background:#fcfcfc;border:1px solid #dedede;border-radius:5px;box-sizing:border-box;"></div>
<div style="position:absolute;left:659.3px;top:971.52px;font-size:21px;line-height:21px;font-weight:400;color:#7b7b7b;letter-spacing:0.35px;white-space:nowrap;-webkit-text-stroke:0.4px currentColor;">Use Preferred Name</div>
<div style="position:absolute;left:659.3px;top:1012.52px;font-size:21px;line-height:21px;font-weight:400;color:#7b7b7b;letter-spacing:0.35px;white-space:nowrap;-webkit-text-stroke:0.4px currentColor;">Do Not Print</div>
<div style="position:absolute;left:1005px;top:617.92px;font-size:21px;line-height:21px;font-weight:400;color:#333;letter-spacing:0.55px;white-space:nowrap;-webkit-text-stroke:0.4px currentColor;">Address Information</div>
<div style="position:absolute;left:992px;top:642px;width:858px;height:294px;background:#fff;border:1.5px solid #c6c6c6;border-radius:10px;box-sizing:border-box;"></div>
<div style="position:absolute;left:1061.4px;top:660.02px;font-size:21px;line-height:21px;font-weight:400;color:#000;letter-spacing:0.45px;white-space:nowrap;-webkit-text-stroke:0.4px currentColor;">Salutation: Julianne Manning</div>
<div style="position:absolute;left:1578px;top:651px;width:26px;height:26px;background:#fcfcfc;border:1px solid #dedede;border-radius:5px;box-sizing:border-box;"></div>
<div style="position:absolute;left:1610.7px;top:653.82px;font-size:21px;line-height:21px;font-weight:400;color:#7b7b7b;letter-spacing:0.35px;white-space:nowrap;-webkit-text-stroke:0.4px currentColor;">Override</div>
<div style="position:absolute;left:1714px;top:649px;width:121px;height:60px;background:#efefef;"></div>
<div style="position:absolute;left:1714px;top:706.5px;width:121px;height:2.5px;background:#d5d5d5;"></div>
<div style="position:absolute;left:1831px;top:655px;width:1.5px;height:48px;background:#d8d8d8;"></div>
<div style="position:absolute;left:1372px;width:800px;text-align:center;top:657.42px;font-size:21px;line-height:21px;font-weight:400;color:#7b7b7b;letter-spacing:0.35px;white-space:nowrap;-webkit-text-stroke:0.4px currentColor;">Select</div>
<div style="position:absolute;left:1372px;width:800px;text-align:center;top:681.92px;font-size:21px;line-height:21px;font-weight:400;color:#7b7b7b;letter-spacing:0.35px;white-space:nowrap;-webkit-text-stroke:0.4px currentColor;">Address</div>
<div style="position:absolute;left:1714px;top:719px;width:121px;height:33.5px;background:#efefef;"></div>
<div style="position:absolute;left:1714px;top:750px;width:121px;height:2.5px;background:#d5d5d5;"></div>
<div style="position:absolute;left:1831px;top:725px;width:1.5px;height:21px;background:#d8d8d8;"></div>
<div style="position:absolute;left:1373.5px;width:800px;text-align:center;top:725.22px;font-size:21px;line-height:21px;font-weight:400;color:#000;letter-spacing:0.35px;white-space:nowrap;-webkit-text-stroke:0.4px currentColor;">MapQuest</div>
<div style="position:absolute;right:884.15px;text-align:right;top:697.02px;font-size:21px;line-height:21px;font-weight:400;color:#7b7b7b;letter-spacing:0.35px;white-space:nowrap;-webkit-text-stroke:0.4px currentColor;">Address:</div>
<div style="position:absolute;left:1170px;top:689px;width:538px;height:35.5px;background:#fff;border:1px solid #bcbcbc;border-top-color:#b0b0b0;box-sizing:border-box;"></div>
<div style="position:absolute;left:1170px;top:726.5px;width:538px;height:35.5px;background:#fff;border:1px solid #bcbcbc;border-top-color:#b0b0b0;box-sizing:border-box;"></div>
<div style="position:absolute;left:1170px;top:764px;width:538px;height:35.5px;background:#fff;border:1px solid #bcbcbc;border-top-color:#b0b0b0;box-sizing:border-box;"></div>
<div style="position:absolute;left:1176px;top:697.02px;font-size:21px;line-height:21px;font-weight:400;color:#808080;letter-spacing:0.35px;white-space:nowrap;-webkit-text-stroke:0.4px currentColor;">123 Main St</div>
<div style="position:absolute;right:884.15px;text-align:right;top:808.62px;font-size:21px;line-height:21px;font-weight:400;color:#7b7b7b;letter-spacing:0.35px;white-space:nowrap;-webkit-text-stroke:0.4px currentColor;">City:</div>
<div style="position:absolute;left:1170px;top:802px;width:266.5px;height:35.5px;background:#fff;border:1px solid #bcbcbc;border-top-color:#b0b0b0;box-sizing:border-box;"></div>
<div style="position:absolute;left:1177.4px;top:810.32px;font-size:21px;line-height:21px;font-weight:400;color:#808080;letter-spacing:0.35px;white-space:nowrap;-webkit-text-stroke:0.4px currentColor;">Kent</div>
<div style="position:absolute;right:535.15px;text-align:right;top:810.32px;font-size:21px;line-height:21px;font-weight:400;color:#7b7b7b;letter-spacing:0.35px;white-space:nowrap;-webkit-text-stroke:0.4px currentColor;">State:</div>
<div style="position:absolute;left:1517.5px;top:802px;width:62.5px;height:35.5px;background:#fff;border:1px solid #bcbcbc;border-top-color:#b0b0b0;box-sizing:border-box;"></div>
<div style="position:absolute;left:1523.5px;top:810.32px;font-size:21px;line-height:21px;font-weight:400;color:#808080;letter-spacing:0.35px;white-space:nowrap;-webkit-text-stroke:0.4px currentColor;">OH</div>
<div style="position:absolute;right:342.65px;text-align:right;top:810.32px;font-size:21px;line-height:21px;font-weight:400;color:#7b7b7b;letter-spacing:0.35px;white-space:nowrap;-webkit-text-stroke:0.4px currentColor;">Zip Code:</div>
<div style="position:absolute;left:1710px;top:802px;width:121px;height:35.5px;background:#fff;border:1px solid #bcbcbc;border-top-color:#b0b0b0;box-sizing:border-box;"></div>
<div style="position:absolute;left:1716px;top:810.32px;font-size:21px;line-height:21px;font-weight:400;color:#808080;letter-spacing:0.35px;white-space:nowrap;-webkit-text-stroke:0.4px currentColor;">44240</div>
<div style="position:absolute;right:884.15px;text-align:right;top:850.12px;font-size:21px;line-height:21px;font-weight:400;color:#7b7b7b;letter-spacing:0.35px;white-space:nowrap;-webkit-text-stroke:0.4px currentColor;">Country:</div>
<div style="position:absolute;left:1170px;top:840px;width:661px;height:35.5px;background:#fff;border:1px solid #bcbcbc;border-top-color:#b0b0b0;box-sizing:border-box;"></div>
<div style="position:absolute;left:1012.6px;top:887.82px;font-size:21px;line-height:21px;font-weight:400;color:#000;letter-spacing:0.3px;white-space:nowrap;-webkit-text-stroke:0.4px currentColor;">Phone Number:</div>
<div style="position:absolute;left:1005px;top:944.22px;font-size:21px;line-height:21px;font-weight:400;color:#333;letter-spacing:0.55px;white-space:nowrap;-webkit-text-stroke:0.4px currentColor;">Online Credentials</div>
<div style="position:absolute;left:992px;top:969px;width:865px;height:163px;background:#fff;border:1.5px solid #c6c6c6;border-radius:10px;box-sizing:border-box;"></div>
<svg style="position:absolute;left:1209px;top:1017px" width="118" height="28" viewBox="0 0 118 28"><rect x="1" y="11" width="90" height="6" fill="#4a9ff5"/><path d="M90 1 L116 14 L90 27 Z" fill="#4a9ff5"/></svg>
<div style="position:absolute;left:1345px;top:1019.72px;font-size:21px;line-height:21px;font-weight:400;color:#2436e6;letter-spacing:0.5px;white-space:nowrap;-webkit-text-stroke:0.4px currentColor;">Create Account</div>
<div style="position:absolute;left:210px;top:581px;width:1px;height:687px;background:#f7f7f7;"></div>
</div></body></html>
